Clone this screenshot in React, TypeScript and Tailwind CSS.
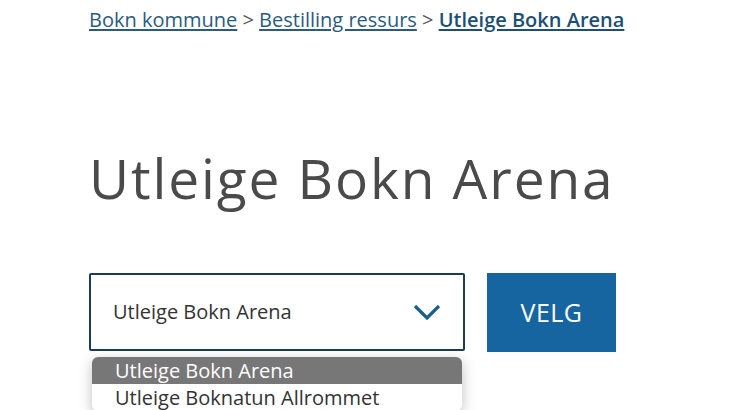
const App = () => {
  return (
    <div className="min-h-screen bg-white font-['Open_Sans',sans-serif] text-[#444] overflow-hidden">
      <div className="pl-[89px] pt-[6px]">
        <nav className="text-[20px] leading-[28px] text-[#555]">
          <a href="#" className="text-[#2b5b80] underline underline-offset-2">Bokn kommune</a>
          <span> &gt; </span>
          <a href="#" className="text-[#2b5b80] underline underline-offset-2">Bestilling ressurs</a>
          <span> &gt; </span>
          <a href="#" className="text-[#1d4f75] font-semibold underline underline-offset-2">Utleige Bokn Arena</a>
        </nav>

        <h1 className="mt-[112px] text-[55px] leading-[64px] tracking-[1.9px] text-[#4a4a4a]">
          Utleige Bokn Arena
        </h1>

        <div className="mt-[63px] flex gap-[22px]">
          <div className="relative w-[376px]">
            <div className="h-[78px] border-2 border-[#1c3b55] rounded-[2px] flex items-center justify-between pl-[22px] pr-[22px]">
              <span className="text-[20px] text-[#333]">Utleige Bokn Arena</span>
              <svg width="28" height="18" viewBox="0 0 28 18" fill="none">
                <path d="M2 3 L14 15 L26 3" stroke="#1d5f8a" strokeWidth="3.2" />
              </svg>
            </div>
            <ul className="absolute left-[3px] top-[84px] w-[370px] bg-white rounded-[6px] shadow-[0_4px_14px_rgba(0,0,0,0.25)] overflow-hidden text-[20px] leading-[27px]">
              <li className="bg-[#777] text-white pl-[23px]">Utleige Bokn Arena</li>
              <li className="text-[#333] pl-[23px]">Utleige Boknatun Allrommet</li>
            </ul>
          </div>
          <button className="w-[129px] h-[79px] bg-[#1765a0] text-white text-[25px] tracking-[0.5px]">
            VELG
          </button>
        </div>
      </div>
    </div>
  );
};

export default App;
